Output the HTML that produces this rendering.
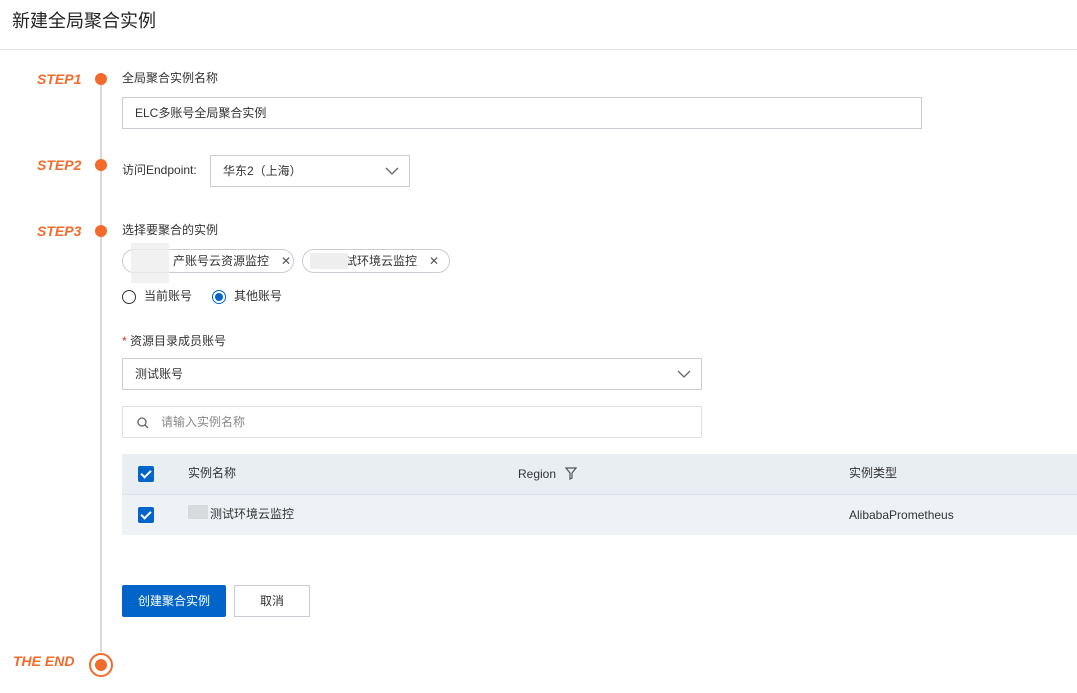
<!DOCTYPE html>
<html><head><meta charset="utf-8"><style>
*{box-sizing:border-box;margin:0;padding:0}
body{width:1077px;height:693px;background:#fff;font-family:"Liberation Sans","Noto Sans CJK SC",sans-serif;font-size:12px;line-height:16px;color:#333;position:relative;overflow:hidden}
.a{position:absolute}
.step{position:absolute;color:#f26b2a;font-style:italic;font-weight:bold;font-size:14px}
.dot{position:absolute;left:95px;width:12px;height:12px;border-radius:50%;background:#f26b2a}
.inp{position:absolute;border:1px solid #c9cdd2;background:#fff;padding-left:12px;display:flex;align-items:center;color:#333}
.tag{position:absolute;height:24px;border:1px solid #c9cdd2;border-radius:12px;background:#fff;display:flex;align-items:center;font-size:12px;color:#333}
.chk{position:absolute;width:16px;height:16px;background:#0064c8;border-radius:2px}
.chk:after{content:"";position:absolute;left:5px;top:2px;width:4px;height:8px;border:solid #fff;border-width:0 2px 2px 0;transform:rotate(45deg)}
</style></head><body>
<div class="a" style="left:12px;top:10px;font-size:18px;line-height:22px;color:#222">新建全局聚合实例</div>
<div class="a" style="left:0;top:49px;width:1077px;height:1px;background:#e3e5e8"></div>
<div class="a" style="left:100px;top:80px;width:2px;height:572px;background:#d6d8db"></div>
<div class="step" style="left:37px;top:71px">STEP1</div><div class="dot" style="top:73px"></div>
<div class="step" style="left:37px;top:157px">STEP2</div><div class="dot" style="top:159px"></div>
<div class="step" style="left:37px;top:223px">STEP3</div><div class="dot" style="top:225px"></div>
<div class="step" style="left:13px;top:653px">THE END</div>
<div class="a" style="left:89px;top:653px;width:24px;height:24px;border:2px solid #f26b2a;border-radius:50%;background:#fff"></div>
<div class="a" style="left:95px;top:659px;width:12px;height:12px;border-radius:50%;background:#f26b2a"></div>
<div class="a" style="left:122px;top:70px">全局聚合实例名称</div>
<div class="inp" style="left:122px;top:97px;width:800px;height:32px">ELC多账号全局聚合实例</div>
<div class="a" style="left:122px;top:162px">访问Endpoint:</div>
<div class="inp" style="left:210px;top:155px;width:200px;height:32px">华东2（上海）
<svg class="a" style="right:10px;top:10px" width="14" height="10"><path d="M1 2l6 6 6-6" fill="none" stroke="#666" stroke-width="1.3"/></svg></div>
<div class="a" style="left:122px;top:222px">选择要聚合的实例</div>
<div class="tag" style="left:122px;top:249px;width:172px"><span style="margin-left:50px">产账号云资源监控</span><span style="margin-left:12px;color:#555">✕</span></div>
<div class="tag" style="left:302px;top:249px;width:148px"><span style="margin-left:42px">试环境云监控</span><span style="margin-left:12px;color:#555">✕</span></div>
<div class="a" style="left:131px;top:243px;width:38px;height:40px;background:#eee;opacity:.8"></div>
<div class="a" style="left:310px;top:253px;width:38px;height:16px;background:#eee"></div>
<div class="a" style="left:122px;top:290px;width:14px;height:14px;border:1px solid #333;border-radius:50%"></div>
<div class="a" style="left:144px;top:288px">当前账号</div>
<div class="a" style="left:212px;top:290px;width:14px;height:14px;border:1px solid #0064c8;border-radius:50%"></div>
<div class="a" style="left:215px;top:293px;width:8px;height:8px;background:#0064c8;border-radius:50%"></div>
<div class="a" style="left:234px;top:288px">其他账号</div>
<div class="a" style="left:122px;top:333px"><span style="color:#d93026">*</span> 资源目录成员账号</div>
<div class="inp" style="left:122px;top:358px;width:580px;height:32px">测试账号
<svg class="a" style="right:10px;top:10px" width="14" height="10"><path d="M1 2l6 6 6-6" fill="none" stroke="#666" stroke-width="1.3"/></svg></div>
<div class="inp" style="left:122px;top:406px;width:580px;height:32px;padding-left:38px;color:#888;border-color:#dcdfe3">请输入实例名称
<svg class="a" style="left:14px;top:10px" width="12" height="12"><circle cx="5" cy="5" r="4" fill="none" stroke="#666" stroke-width="1.3"/><path d="M8 8l3 3" stroke="#666" stroke-width="1.3"/></svg></div>
<div class="a" style="left:122px;top:454px;width:955px;height:40px;background:#e9eef3"></div>
<div class="a" style="left:122px;top:494px;width:955px;height:1px;background:#dde2e8"></div>
<div class="a" style="left:122px;top:495px;width:955px;height:40px;background:#eef2f6"></div>
<div class="chk" style="left:138px;top:466px"></div>
<div class="chk" style="left:138px;top:507px"></div>
<div class="a" style="left:188px;top:465px">实例名称</div>
<div class="a" style="left:518px;top:466px">Region</div>
<svg class="a" style="left:565px;top:467px" width="12" height="13"><path d="M1 1h10L7 6v5l-2 1V6z" fill="none" stroke="#555" stroke-width="1.2"/></svg>
<div class="a" style="left:849px;top:465px">实例类型</div>
<div class="a" style="left:188px;top:505px;width:20px;height:14px;background:#d8dbde"></div>
<div class="a" style="left:210px;top:506px">测试环境云监控</div>
<div class="a" style="left:849px;top:507px">AlibabaPrometheus</div>
<div class="a" style="left:122px;top:585px;width:104px;height:32px;background:#0064c8;color:#fff;display:flex;align-items:center;justify-content:center;border-radius:2px">创建聚合实例</div>
<div class="a" style="left:234px;top:585px;width:76px;height:32px;border:1px solid #c9cdd2;display:flex;align-items:center;justify-content:center">取消</div>
</body></html>
